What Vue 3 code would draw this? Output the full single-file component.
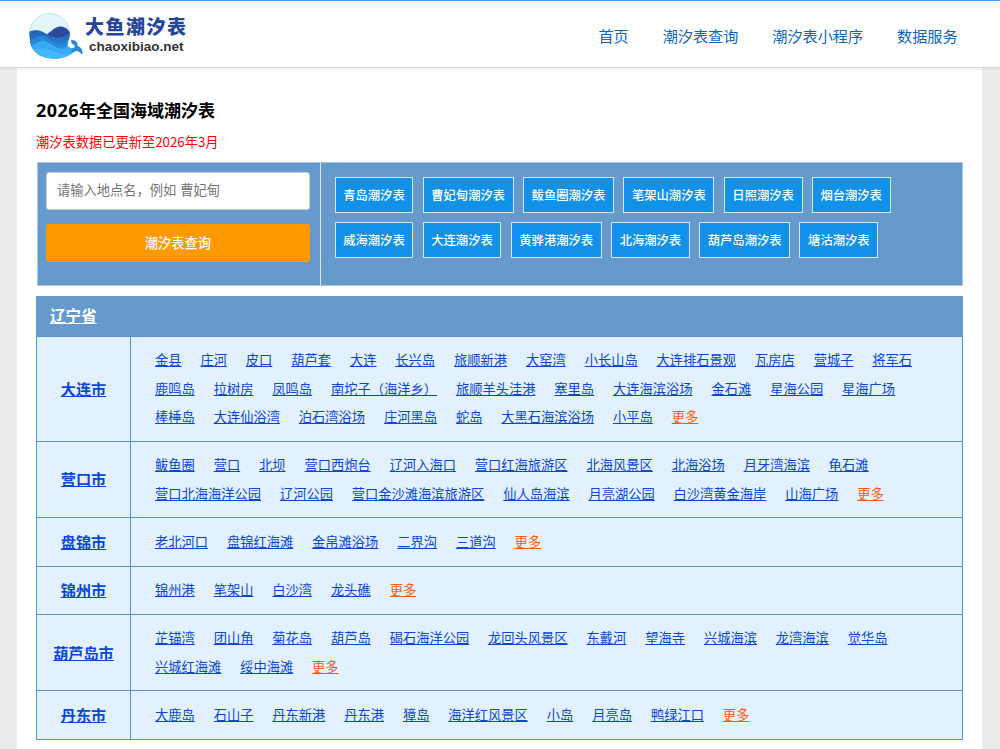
<template>
  <header class="site-header">
    <a class="logo" href="#">
      <svg class="logo-mark" viewBox="0 0 54 46" aria-hidden="true">
        <defs>
          <linearGradient id="deep" x1="0" y1="0" x2="0" y2="1">
            <stop offset="0" stop-color="#2460b4" />
            <stop offset="1" stop-color="#2f8fe0" />
          </linearGradient>
        </defs>
        <ellipse cx="20.6" cy="21" rx="20.2" ry="20.7" fill="#e3f6fb" stroke="#9ccde6" stroke-width="0.5" />
        <path d="M18 21C22 19 26 13.5 31 13.5C36 13.5 39 16 40.6 19C41 23 40 26 38.5 28L24 27Z" fill="#2c489a" />
        <path d="M0.4 18.5C5 17 9 16.5 13 18.5C20 22 23 24.5 29 24.5C34 24.5 37 22 40.8 20.5C41 24 39 27 38.6 30L34 42H10C3 36 0 28 0.4 18.5Z" fill="url(#deep)" />
        <path d="M0.8 28C5 26 8 22.5 13 23C20 23.5 23 31 31 31C35 31 38 28 39.6 26C38.3 29 38.2 32 39 34L34 43H12C5 39 1.5 34 0.8 28Z" fill="#2787d9" />
        <path d="M2.3 33C7 32 10 27 15 28C22 29.5 26 36 33 35.5C36 35 37.5 33 38.4 30C38.6 34 42 36.2 46 35L48 37.5C43 40 38 45.8 26.5 45.8C14 45.8 6 41 2.3 33Z" fill="#38a9f4" />
        <path d="M3.5 35.5C9 37 13 34 18 36C25 38.5 31 42 40 41C36 44 32 45.8 26 45.8C15 45.8 7 42 3.5 35.5Z" fill="#42b7fd" />
        <path d="M42 27C46.5 27 49.3 29.5 48.6 33C51.5 34 54.3 36.5 53.3 41.8C51.3 39 49 37.8 46.4 37.9L43 39.2L42.5 36C45.2 35.6 46.2 34 45.3 32C43.2 31.5 42 29.8 42 27Z" fill="#2a88d6" />
      </svg>
      <span class="logo-text">
        <span class="logo-name">大鱼潮汐表</span>
        <span class="logo-domain">chaoxibiao.net</span>
      </span>
    </a>
    <nav class="nav">
      <a v-for="item in navItems" :key="item" href="#">{{ item }}</a>
    </nav>
  </header>

  <main class="page">
    <h1><span class="year">2026</span>年全国海域潮汐表</h1>
    <p class="notice">潮汐表数据已更新至2026年3月</p>

    <section class="search-panel">
      <form class="search-form" @submit.prevent>
        <input v-model="keyword" type="text" placeholder="请输入地点名，例如 曹妃甸" />
        <button type="submit">潮汐表查询</button>
      </form>
      <div class="hot">
        <div v-for="(row, index) in hotPlaces" :key="index" class="hot-row">
          <a v-for="place in row" :key="place" href="#">{{ place }}潮汐表</a>
        </div>
      </div>
    </section>

    <section class="province">
      <h2><a href="#">辽宁省</a></h2>
      <div v-for="city in cities" :key="city.name" class="city">
        <h3><a href="#">{{ city.name }}</a></h3>
        <div class="ports">
          <a v-for="port in city.ports" :key="port" href="#">{{ port }}</a>
          <a class="more" href="#">更多</a>
        </div>
      </div>
    </section>
  </main>
</template>

<script setup>
import { ref } from 'vue';

const keyword = ref('');

const navItems = ['首页', '潮汐表查询', '潮汐表小程序', '数据服务'];

const hotPlaces = [
  ['青岛', '曹妃甸', '鲅鱼圈', '笔架山', '日照', '烟台'],
  ['威海', '大连', '黄骅港', '北海', '葫芦岛', '塘沽'],
];

const cities = [
  {
    name: '大连市',
    ports: [
      '金县', '庄河', '皮口', '葫芦套', '大连', '长兴岛', '旅顺新港', '大窑湾', '小长山岛',
      '大连排石景观', '瓦房店', '营城子', '将军石', '鹿鸣岛', '拉树房', '凤鸣岛',
      '南坨子（海洋乡）', '旅顺羊头洼港', '塞里岛', '大连海滨浴场', '金石滩', '星海公园',
      '星海广场', '棒棰岛', '大连仙浴湾', '泊石湾浴场', '庄河黑岛', '蛇岛', '大黑石海滨浴场',
      '小平岛',
    ],
  },
  {
    name: '营口市',
    ports: [
      '鲅鱼圈', '营口', '北坝', '营口西炮台', '辽河入海口', '营口红海旅游区', '北海风景区',
      '北海浴场', '月牙湾海滨', '龟石滩', '营口北海海洋公园', '辽河公园',
      '营口金沙滩海滨旅游区', '仙人岛海滨', '月亮湖公园', '白沙湾黄金海岸', '山海广场',
    ],
  },
  {
    name: '盘锦市',
    ports: ['老北河口', '盘锦红海滩', '金帛滩浴场', '二界沟', '三道沟'],
  },
  {
    name: '锦州市',
    ports: ['锦州港', '笔架山', '白沙湾', '龙头礁'],
  },
  {
    name: '葫芦岛市',
    ports: [
      '芷锚湾', '团山角', '菊花岛', '葫芦岛', '碣石海洋公园', '龙回头风景区', '东戴河',
      '望海寺', '兴城海滨', '龙湾海滨', '觉华岛', '兴城红海滩', '绥中海滩',
    ],
  },
  {
    name: '丹东市',
    ports: [
      '大鹿岛', '石山子', '丹东新港', '丹东港', '獐岛', '海洋红风景区', '小岛', '月亮岛',
      '鸭绿江口',
    ],
  },
];
</script>

<style>
body {
  background: #ebebeb;
  font-family: 'Noto Sans CJK SC', sans-serif;
  overflow: hidden;
}
</style>

<style scoped>
.site-header {
  box-sizing: border-box;
  height: 68px;
  padding: 0 42.4px 0 29px;
  display: flex;
  justify-content: space-between;
  border-top: 1px solid #3a9aec;
  border-bottom: 1px solid #d6d8d8;
  background: #fff;
  box-shadow: 0 1px 2px rgba(0, 0, 0, 0.08);
  position: relative;
}
.logo {
  display: flex;
  padding-top: 12px;
  text-decoration: none;
}
.logo-mark {
  width: 54px;
  height: 46px;
}
.logo-text {
  display: flex;
  flex-direction: column;
  padding-left: 2px;
}
.logo-name {
  font-size: 19px;
  font-weight: 900;
  letter-spacing: 1.5px;
  line-height: 26px;
  color: #24469c;
}
.logo-domain {
  padding-left: 4px;
  font-family: 'Liberation Sans', sans-serif;
  font-size: 13.5px;
  font-weight: bold;
  line-height: 16px;
  color: #333;
}
.nav {
  display: flex;
  gap: 34px;
  font-size: 15.14px;
  line-height: 69px;
}
.nav a {
  color: #0b66c3;
  text-decoration: none;
}
.page {
  box-sizing: border-box;
  width: 965px;
  min-height: 681px;
  margin-left: 17px;
  padding: 28px 19px 10px;
  background: #fff;
}
h1 {
  height: 27px;
  margin: 0;
  font-size: 17.03px;
  line-height: 27px;
  color: #000;
}
.year {
  font-family: 'Noto Sans', sans-serif;
  font-size: 18px;
  letter-spacing: 0.45px;
  line-height: 1;
}
.notice {
  margin: 6px 0 0;
  font-size: 13.25px;
  line-height: 26px;
  color: #f00;
}
.search-panel {
  box-sizing: border-box;
  display: flex;
  width: 926px;
  height: 124px;
  margin: 7px 0 10px 1px;
  border: 1px solid #a9c6e2;
  background: #69c;
}
.search-form {
  box-sizing: border-box;
  width: 283px;
  padding: 9px 10px 0 8px;
  border-right: 1px solid #d8e5f2;
  display: flex;
  flex-direction: column;
  gap: 14px;
}
.search-form input {
  box-sizing: border-box;
  height: 38px;
  padding: 0 10px 3px;
  border: 1px solid #ccc;
  border-radius: 3px;
  font-family: inherit;
  font-size: 13.25px;
  word-spacing: 1px;
  outline: none;
}
.search-form input::placeholder {
  color: #757575;
}
.search-form button {
  height: 38px;
  padding: 0 0 2px;
  border: 0;
  border-radius: 3px;
  background: #f90;
  color: #fff;
  font-family: inherit;
  font-size: 13.25px;
  font-weight: 500;
}
.hot {
  padding: 14px 0 0 13.5px;
  display: flex;
  flex-direction: column;
  gap: 9px;
}
.hot-row {
  display: flex;
  gap: 9.2px;
}
.hot-row a {
  box-sizing: border-box;
  height: 36.2px;
  padding: 0 7.7px;
  border: 1px solid #d5e6f7;
  background: #1391e8;
  color: #fff;
  font-size: 12.3px;
  font-weight: 500;
  line-height: 34px;
  text-decoration: none;
}
.province {
  width: 927px;
}
h2 {
  box-sizing: border-box;
  height: 39.6px;
  margin: 0;
  padding-left: 14px;
  background: #69c;
  font-size: 15.6px;
  line-height: 38px;
}
h2 a {
  color: #fff;
}
.city {
  display: flex;
  border: 1px solid #5596d8;
  border-bottom: 0;
  background: #e3f1ff;
}
.city:last-child {
  border-bottom: 1px solid #5596d8;
}
h3 {
  box-sizing: border-box;
  flex: none;
  width: 94px;
  margin: 0;
  padding-bottom: 2px;
  border-right: 1px solid #5596d8;
  display: flex;
  align-items: center;
  justify-content: center;
  font-size: 15.14px;
}
h3 a,
.ports a {
  color: #0b47d3;
}
.ports {
  display: flex;
  flex-wrap: wrap;
  column-gap: 18.92px;
  padding: 9.6px 19px 9.3px 24px;
  font-size: 13.25px;
  line-height: 28.38px;
}
.ports .more {
  color: #ff5a0a;
}
</style>
